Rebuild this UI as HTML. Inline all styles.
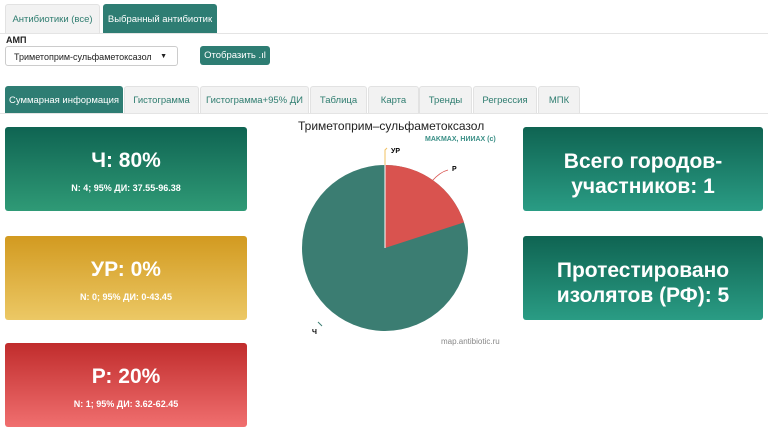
<!DOCTYPE html><html><head><meta charset="utf-8"><style>
body{margin:0;width:768px;height:435px;background:#fff;font-family:"Liberation Sans",sans-serif;position:relative;overflow:hidden}
.a{position:absolute}
.tab{position:absolute;top:86px;height:27px;background:#f2f2f2;border:1px solid #e2e2e2;border-bottom:none;border-radius:3px 3px 0 0;color:#2f7d70;font-size:9.5px;line-height:27px;text-align:center;box-sizing:border-box;white-space:nowrap}
.card{position:absolute;border-radius:3px;color:#fff;text-align:center;font-weight:bold}
.card .b{font-size:21px;margin-top:22px}
.card .s{font-size:9px;margin-top:10px}
.rc{font-size:21px;line-height:25px}
</style></head><body>
<div class="a" style="left:0;top:33px;width:768px;height:1px;background:#e4e4e4"></div>
<div class="tab" style="left:5px;top:4px;height:29px;width:95px;line-height:29px;font-size:9.5px">Антибиотики (все)</div>
<div class="tab" style="left:103px;top:4px;height:29px;width:114px;line-height:29px;background:#2e7d73;color:#fff;border-color:#2e7d73">Выбранный антибиотик</div>
<div class="a" style="left:6px;top:35px;font-size:9px;font-weight:bold;color:#222">АМП</div>
<div class="a" style="left:5px;top:46px;width:173px;height:20px;border:1px solid #ccc;border-radius:3px;font-size:9px;line-height:20px;color:#222;box-sizing:border-box;padding-left:8px">Триметоприм-сульфаметоксазол<span style="position:absolute;right:10px;top:0;font-size:7px">▼</span></div>
<div class="a" style="left:200px;top:46px;width:70px;height:19px;background:#2e7d73;border-radius:3px;color:#fff;font-size:9.5px;line-height:19px;text-align:center">Отобразить .ıl</div>
<div class="a" style="left:0;top:113px;width:768px;height:1px;background:#e4e4e4"></div>
<div class="tab" style="left:5px;width:118px;background:#2e7d73;color:#fff;border-color:#2e7d73">Суммарная информация</div>
<div class="tab" style="left:124px;width:75px">Гистограмма</div>
<div class="tab" style="left:200px;width:109px">Гистограмма+95% ДИ</div>
<div class="tab" style="left:310px;width:57px">Таблица</div>
<div class="tab" style="left:368px;width:51px">Карта</div>
<div class="tab" style="left:419px;width:53px">Тренды</div>
<div class="tab" style="left:473px;width:64px">Регрессия</div>
<div class="tab" style="left:538px;width:42px">МПК</div>
<div class="card" style="left:5px;top:127px;width:242px;height:84px;background:linear-gradient(#0f6452,#2f9a76)"><div class="b">Ч: 80%</div><div class="s">N: 4; 95% ДИ: 37.55-96.38</div></div>
<div class="card" style="left:5px;top:236px;width:242px;height:84px;background:linear-gradient(#d29a20,#ecc865)"><div class="b">УР: 0%</div><div class="s">N: 0; 95% ДИ: 0-43.45</div></div>
<div class="card" style="left:5px;top:343px;width:242px;height:84px;background:linear-gradient(#c02c2c,#f06f6f)"><div class="b">Р: 20%</div><div class="s">N: 1; 95% ДИ: 3.62-62.45</div></div>
<div class="card" style="left:523px;top:127px;width:240px;height:84px;background:linear-gradient(#0f6452,#2a9c84)"><div class="rc" style="margin-top:22px">Всего городов-<br>участников: 1</div></div>
<div class="card" style="left:523px;top:236px;width:240px;height:84px;background:linear-gradient(#0f6452,#2a9c84)"><div class="rc" style="margin-top:22px">Протестировано<br>изолятов (РФ): 5</div></div>
<div class="a" style="left:298px;top:119px;font-size:12px;color:#222">Триметоприм–сульфаметоксазол</div>
<div class="a" style="left:425px;top:136px;font-size:7px;font-weight:bold;color:#3a8f86">MAKMAX, НИИАХ (c)</div>
<svg class="a" style="left:0;top:0" width="768" height="435">
<circle cx="385" cy="248" r="83" fill="#3b7d72"/>
<path d="M385 248 L385 165 A83 83 0 0 1 464 222.4 Z" fill="#d9534f"/>
<line x1="385" y1="165" x2="385" y2="248" stroke="#fff" stroke-width="1"/>
<path d="M385 165 V150 L387 148" stroke="#f0c060" fill="none"/>
<path d="M432 181 Q440 172 448 170" stroke="#d9534f" fill="none" stroke-width=".8"/>
<path d="M318 322 L322 326" stroke="#3b7d72"/>
<text x="391" y="153" font-size="7" font-weight="bold" font-family="Liberation Sans">УР</text>
<text x="452" y="171" font-size="7" font-weight="bold" font-family="Liberation Sans">Р</text>
<text x="312" y="334" font-size="7" font-weight="bold" font-family="Liberation Sans">Ч</text>
<text x="441" y="344" font-size="8" fill="#888" font-family="Liberation Sans">map.antibiotic.ru</text>
</svg>
</body></html>
